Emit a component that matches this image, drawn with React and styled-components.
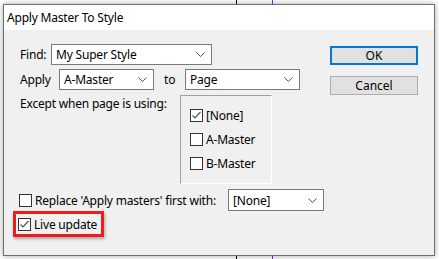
import styled, { createGlobalStyle } from "styled-components";

const GlobalStyle = createGlobalStyle`
  html, body {
    margin: 0;
    padding: 0;
  }
  body {
    width: 439px;
    height: 259px;
    overflow: hidden;
    font-family: "Noto Sans", "Open Sans", sans-serif;
    font-size: 12px;
    color: #000;
    background:
      linear-gradient(#000, #000) 236px 0 / 1px 100% no-repeat,
      linear-gradient(#8a2be2, #8a2be2) 272px 0 / 1px 100% no-repeat,
      #ffffff;
  }
`;

const Dialog = styled.div`
  margin: 4px 0 0 3px;
  width: 430px;
  height: 250px;
  border: 1px solid #6e6e6e;
  background: #f0f0f0;
  box-shadow: 0 0 6px rgba(0, 0, 0, 0.35);
  display: flex;
  flex-direction: column;
`;

const TitleBar = styled.div`
  height: 25px;
  background: #fff;
  display: flex;
  align-items: center;
  padding-left: 3px;
  font-size: 12px;
  letter-spacing: -0.2px;
`;

const Body = styled.div`
  flex: 1;
  display: flex;
  justify-content: space-between;
`;

const LeftColumn = styled.div`
  padding: 14px 0 0 16px;
  display: flex;
  flex-direction: column;
`;

const ButtonColumn = styled.div`
  padding: 16px 16px 0 0;
  display: flex;
  flex-direction: column;
  gap: 11px;
`;

const Button = styled.div`
  width: 88px;
  height: 19px;
  box-sizing: border-box;
  background: #e1e1e1;
  border: ${(p) => (p.$default ? "2px solid #0078d7" : "1px solid #adadad")};
  display: flex;
  align-items: center;
  justify-content: center;
  line-height: 1;
`;

const Row = styled.div`
  display: flex;
  align-items: ${(p) => p.$align || "center"};
  margin-top: ${(p) => p.$gap || 0}px;
`;

const Label = styled.span`
  width: ${(p) => (p.$width ? `${p.$width}px` : "auto")};
  padding-left: ${(p) => p.$indent || 0}px;
  box-sizing: border-box;
  margin-top: ${(p) => p.$top || 0}px;
  white-space: nowrap;
  letter-spacing: -0.2px;
`;

const Select = styled.div`
  width: ${(p) => p.$width}px;
  height: ${(p) => p.$height || 21}px;
  box-sizing: border-box;
  background: #fff;
  border: 1px solid #7a7a7a;
  display: flex;
  align-items: center;
  justify-content: space-between;
  padding: 0 6px 0 4px;
  letter-spacing: -0.2px;
`;

const ListBox = styled.div`
  width: 92px;
  height: 89px;
  box-sizing: border-box;
  border-top: 1px solid #a0a0a0;
  border-left: 1px solid #a0a0a0;
  border-right: 1px solid #fff;
  border-bottom: 1px solid #fff;
  padding: 7px 0 0 9px;
`;

const ListItem = styled.div`
  height: 24px;
  display: flex;
  align-items: center;
  gap: 3px;
  letter-spacing: -0.2px;
`;

const Box = styled.div`
  width: 13px;
  height: 13px;
  box-sizing: border-box;
  border: 1px solid #333;
  background: #fff;
  flex-shrink: 0;
  display: flex;
  align-items: center;
  justify-content: center;
`;

const CheckLabel = styled.label`
  display: flex;
  align-items: center;
  gap: 3px;
  margin-left: -1px;
  white-space: nowrap;
  letter-spacing: -0.2px;
`;

const Highlight = styled.div`
  align-self: flex-start;
  margin-left: -7px;
  border: 3px solid #ee1c1c;
  padding: 3px 4px 3px 3px;
  height: 14px;
  box-sizing: content-box;
  display: flex;
  align-items: center;
  box-shadow: 1px 2px 3px rgba(0, 0, 0, 0.3);
`;

function Chevron() {
  return (
    <svg width="9" height="5" viewBox="0 0 9 5">
      <polyline points="0.5,0.5 4.5,4.5 8.5,0.5" fill="none" stroke="#505050" strokeWidth="1" />
    </svg>
  );
}

function Checkbox({ checked }) {
  return (
    <Box>
      {checked && (
        <svg width="11" height="11" viewBox="0 0 11 11">
          <polyline points="1.5,5.5 4,8 9.5,2" fill="none" stroke="#555" strokeWidth="1.2" />
        </svg>
      )}
    </Box>
  );
}

function Dropdown({ value, width, height }) {
  return (
    <Select $width={width} $height={height}>
      <span>{value}</span>
      <Chevron />
    </Select>
  );
}

export default function App() {
  return (
    <>
      <GlobalStyle />
      <Dialog>
        <TitleBar>Apply Master To Style</TitleBar>
        <Body>
          <LeftColumn>
            <Row>
              <Label $width={31}>Find:</Label>
              <Dropdown value="My Super Style" width={161} />
            </Row>
            <Row $gap={4}>
              <Label $width={39}>Apply</Label>
              <Dropdown value="A-Master" width={95} />
              <Label $width={31} $indent={10}>to</Label>
              <Dropdown value="Page" width={115} />
            </Row>
            <Row $gap={5} $align="flex-start">
              <Label $width={160}>Except when page is using:</Label>
              <ListBox>
                <ListItem>
                  <Checkbox checked />
                  [None]
                </ListItem>
                <ListItem>
                  <Checkbox />
                  A-Master
                </ListItem>
                <ListItem>
                  <Checkbox />
                  B-Master
                </ListItem>
              </ListBox>
            </Row>
            <Row $gap={5}>
              <CheckLabel style={{ width: 209 }}>
                <Checkbox />
                Replace 'Apply masters' first with:
              </CheckLabel>
              <Dropdown value="[None]" width={96} height={22} />
            </Row>
            <Highlight>
              <CheckLabel>
                <Checkbox checked />
                Live update
              </CheckLabel>
            </Highlight>
          </LeftColumn>
          <ButtonColumn>
            <Button $default>OK</Button>
            <Button>Cancel</Button>
          </ButtonColumn>
        </Body>
      </Dialog>
    </>
  );
}
